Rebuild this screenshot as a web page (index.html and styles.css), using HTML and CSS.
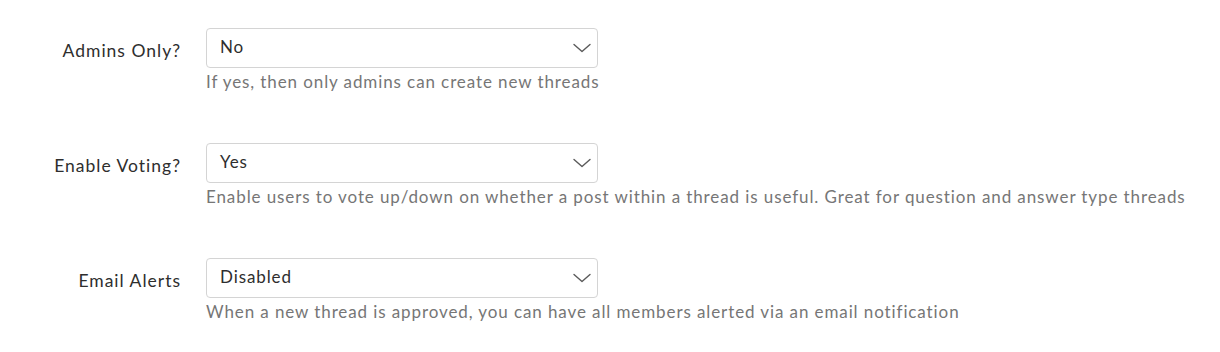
FILE: index.html
```html
<!DOCTYPE html>
<html lang="en">
<head>
<meta charset="utf-8">
<title>Thread settings</title>
<link rel="stylesheet" href="styles.css">
</head>
<body>
<form class="settings">
  <div class="row">
    <label class="label" for="admins">Admins Only?</label>
    <div class="field">
      <div class="select">
        <span class="value" id="admins">No</span>
        <svg class="chevron" width="18" height="10" viewBox="0 0 18 10"><path d="M1 1.5 L9 8.5 L17 1.5" fill="none" stroke="#5a5a5a" stroke-width="1.4" stroke-linecap="round" stroke-linejoin="round"/></svg>
      </div>
      <p class="help">If yes, then only admins can create new threads</p>
    </div>
  </div>
  <div class="row">
    <label class="label" for="voting">Enable Voting?</label>
    <div class="field">
      <div class="select">
        <span class="value" id="voting">Yes</span>
        <svg class="chevron" width="18" height="10" viewBox="0 0 18 10"><path d="M1 1.5 L9 8.5 L17 1.5" fill="none" stroke="#5a5a5a" stroke-width="1.4" stroke-linecap="round" stroke-linejoin="round"/></svg>
      </div>
      <p class="help">Enable users to vote up/down on whether a post within a thread is useful. Great for question and answer type threads</p>
    </div>
  </div>
  <div class="row">
    <label class="label" for="alerts">Email Alerts</label>
    <div class="field">
      <div class="select">
        <span class="value" id="alerts">Disabled</span>
        <svg class="chevron" width="18" height="10" viewBox="0 0 18 10"><path d="M1 1.5 L9 8.5 L17 1.5" fill="none" stroke="#5a5a5a" stroke-width="1.4" stroke-linecap="round" stroke-linejoin="round"/></svg>
      </div>
      <p class="help">When a new thread is approved, you can have all members alerted via an email notification</p>
    </div>
  </div>
</form>
</body>
</html>
```
FILE: styles.css
```css
body {
  margin: 0;
  background: #fff;
  font-family: Lato, "Noto Sans", sans-serif;
  color: #333;
}
.settings {
  padding: 28px 0 0 0;
  display: flex;
  flex-direction: column;
  gap: 49px;
}
.row {
  display: grid;
  grid-template-columns: 180px 1fr;
  column-gap: 26px;
  align-items: start;
}
.label {
  text-align: right;
  font-size: 17.5px;
  letter-spacing: 1px;
  line-height: 24px;
  padding-top: 11px;
  margin-right: -1px;
  color: #2e2e2e;
}
.field {
  display: flex;
  flex-direction: column;
}
.select {
  width: 392px;
  height: 40px;
  box-sizing: border-box;
  border: 1px solid #d4d4d4;
  border-radius: 4px;
  display: flex;
  align-items: center;
  justify-content: space-between;
  padding: 0 6px 0 13px;
}
.value {
  font-size: 17px;
  letter-spacing: 0.9px;
  color: #2e2e2e;
  padding-bottom: 3px;
}
.chevron {
  display: block;
}
.help {
  margin: 2px 0 0 0;
  font-size: 17px;
  letter-spacing: 0.9px;
  line-height: 24px;
  color: #767676;
}
```
